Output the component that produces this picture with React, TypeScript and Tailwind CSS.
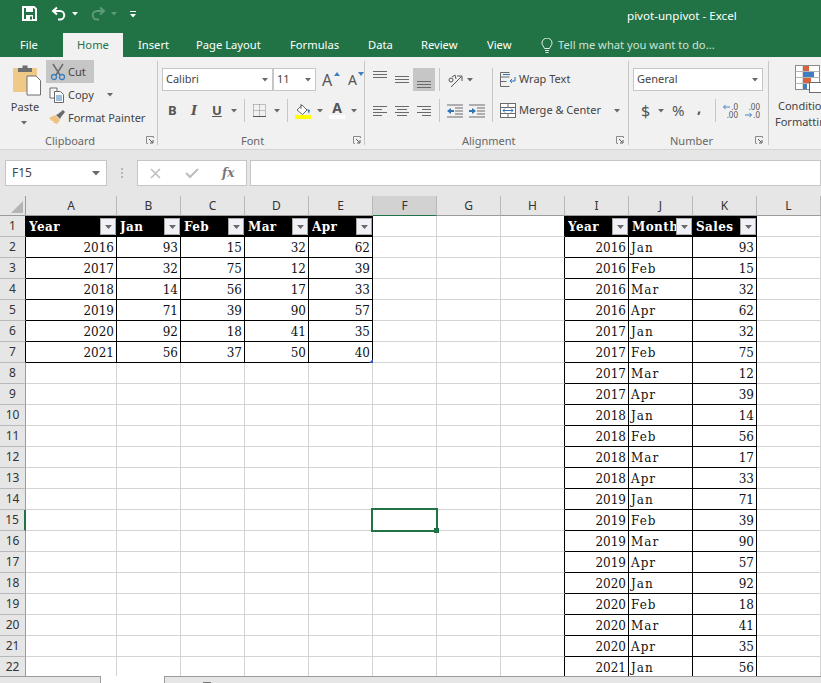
import React from 'react';

const ui = { fontFamily: '"Noto Sans", "Open Sans", sans-serif' };
const serif = { fontFamily: '"DejaVu Serif", "Liberation Serif", serif' };

const Caret = ({ className = 'ml-0' }: { className?: string }) => (
  <svg width="6" height="4" viewBox="0 0 6 4" className={`shrink-0 ${className}`}>
    <path d="M0 0h6L3 3.5z" fill="#6a6a6a" />
  </svg>
);

const Launcher = ({ className }: { className: string }) => (
  <svg width="8" height="8" viewBox="0 0 8 8" className={className}>
    <path d="M.5 7V.5H7.5M7.5 .5V2M.5 7.5H2" stroke="#8a8a8a" fill="none" />
    <path d="M3 3l3.5 3.5M7 4v3H4" stroke="#5a5a5a" fill="none" />
  </svg>
);

const Sep = ({ className }: { className: string }) => <div className={`w-px bg-[#c6c6c6] shrink-0 ${className}`} />;

// horizontal bars used by all the alignment icons
const Lines = ({ rows, h = 14 }: { rows: [number, number, number][]; h?: number }) => (
  <svg width="16" height={h} viewBox={`0 0 16 ${h}`} className="shrink-0">
    {rows.map(([x, y, w], i) => (
      <rect key={i} x={x} y={y} width={w} height="1" fill="#6a6a6a" />
    ))}
  </svg>
);

const Group = ({ w, label, labelClass, launcherClass, children }: { w: string; label: string; labelClass: string; launcherClass: string; children: React.ReactNode }) => (
  <div className={`flex flex-col h-[84px] mt-[4px] border-r border-[#c6c6c6] shrink-0 ${w}`}>
    <div className="flex-1 min-h-0">{children}</div>
    <div className="flex items-center h-[14px] -mb-[2px] text-[#666]">
      <span className={`text-[11px] leading-none ${labelClass}`}>{label}</span>
      <Launcher className={`ml-auto ${launcherClass}`} />
    </div>
  </div>
);

const Select = ({ text, w, caretClass }: { text: string; w: string; caretClass: string }) => (
  <div className={`h-[23px] bg-white border border-[#c6c6c6] flex items-center pl-[3px] text-[11px] text-[#444] shrink-0 ${w}`}>
    <span>{text}</span>
    <Caret className={`ml-auto ${caretClass}`} />
  </div>
);

const TopBar = () => (
  <div className="h-[33px] flex items-center text-white shrink-0">
    <svg width="15" height="15" viewBox="0 0 15 15" className="ml-[22px] -mt-[6px]">
      <path d="M1 1h11l2 2v11H1z" fill="none" stroke="#fff" strokeWidth="2" />
      <rect x="4" y="1" width="7" height="5" fill="#fff" />
      <rect x="4" y="9" width="7" height="5" fill="#fff" />
      <rect x="8" y="10.5" width="2" height="3" fill="#217346" />
    </svg>
    <svg width="15" height="15" viewBox="0 0 15 15" className="ml-[14px] -mt-[6px]">
      <path d="M6 1.5L2 5l4 3.5" fill="none" stroke="#fff" strokeWidth="2" />
      <path d="M2.5 5H9a4 4 0 0 1 0 8.5H7" fill="none" stroke="#fff" strokeWidth="2" />
    </svg>
    <svg width="6" height="4" viewBox="0 0 6 4" className="ml-[6px] -mt-[6px]"><path d="M0 0h6L3 3.5z" fill="#fff" /></svg>
    <svg width="15" height="15" viewBox="0 0 15 15" className="ml-[13px] -mt-[6px]">
      <path d="M9 1.5L13 5 9 8.5" fill="none" stroke="#5f9a7b" strokeWidth="2" />
      <path d="M12.5 5H6a4 4 0 0 0 0 8.5H8" fill="none" stroke="#5f9a7b" strokeWidth="2" />
    </svg>
    <svg width="6" height="4" viewBox="0 0 6 4" className="ml-[5px] -mt-[6px]"><path d="M0 0h6L3 3.5z" fill="#5f9a7b" /></svg>
    <svg width="6" height="7" viewBox="0 0 6 7" className="ml-[13px] -mt-[4px]">
      <rect width="6" height="1" fill="#fff" />
      <path d="M0 3h6L3 6.5z" fill="#fff" />
    </svg>
    <span className="ml-[491px] -mt-px text-[11.6px]">pivot-unpivot - Excel</span>
  </div>
);

const Tabs = () => (
  <div className="h-[24px] flex items-center text-white text-[11.2px] shrink-0 whitespace-nowrap">
    <span className="ml-[20px] w-[18px]">File</span>
    <span className="ml-[25px] h-full w-[60px] bg-[#f1f1f1] text-[#217346] flex items-center justify-center">Home</span>
    <span className="ml-[15px] w-[29px]">Insert</span>
    <span className="ml-[29px] w-[65px]">Page Layout</span>
    <span className="ml-[29px] w-[49px]">Formulas</span>
    <span className="ml-[29px] w-[24px]">Data</span>
    <span className="ml-[29px] w-[37px]">Review</span>
    <span className="ml-[29px] w-[25px]">View</span>
    <svg width="12" height="15" viewBox="0 0 12 15" className="ml-[29px]">
      <path d="M3.5 10.5C3 8.5 1 7.5 1 5a5 5 0 0 1 10 0c0 2.500-2 3.500-2.500 5.500z" fill="none" stroke="#e4efe9" />
      <path d="M4 12.500h4M4.500 14.500h3" stroke="#e4efe9" />
    </svg>
    <span className="ml-[5px] text-[#cfe2d7]">Tell me what you want to do...</span>
  </div>
);

const Clipboard = () => (
  <Group w="w-[158px]" label="Clipboard" labelClass="ml-[45px]" launcherClass="mr-[3px]">
    <div className="flex">
      <div className="w-[46px] shrink-0 flex flex-col items-center text-[11px] text-[#444]">
        <svg width="30" height="32" viewBox="0 0 30 32" className="mt-[3px] ml-[8px]">
          <rect x="1" y="4" width="24" height="24" rx="1" fill="#f0c987" />
          <path d="M6 8V4h4.500V1.500h5V4H20v4z" fill="#6f6f6f" />
          <path d="M15 12h9l4.500 4.500V31H15z" fill="#fff" stroke="#6f6f6f" />
        </svg>
        <span className="leading-none mt-[5px] ml-[4px]">Paste</span>
        <Caret className="mt-[9px] ml-[2px]" />
      </div>
      <div className="flex flex-col text-[11px] text-[#444] leading-none whitespace-nowrap">
        <div className="h-[23px] w-[48px] mt-[-1px] bg-[#c6c6c6] flex items-center">
          <svg width="16" height="18" viewBox="0 0 16 18" className="ml-[4px]">
            <path d="M3 1l7 11M13 1L6 12" stroke="#6a6a6a" strokeWidth="1.500" />
            <circle cx="4" cy="14" r="2.500" fill="none" stroke="#3f7fbf" strokeWidth="1.300" />
            <circle cx="12" cy="14" r="2.500" fill="none" stroke="#3f7fbf" strokeWidth="1.300" />
          </svg>
          <span className="ml-[2px]">Cut</span>
        </div>
        <div className="h-[23px] flex items-center">
          <svg width="16" height="16" viewBox="0 0 16 16" className="ml-[3px]">
            <path d="M1 1h7v3M5 11H1V1" fill="#fff" stroke="#6a6a6a" />
            <path d="M5.500 4.500h6l3 3v8h-9z" fill="#fff" stroke="#6a6a6a" />
            <path d="M7 9h6M7 11h6M7 13h6" stroke="#3f7fbf" />
          </svg>
          <span className="ml-[3px] w-[30px]">Copy</span>
          <Caret className="ml-[9px]" />
        </div>
        <div className="h-[23px] flex items-center">
          <svg width="17" height="15" viewBox="0 0 17 15" className="ml-[3px]">
            <path d="M0 8l6-3 5 5-3 4-2-1-2 0 1-2-2 0z" fill="#eec27e" />
            <path d="M7 5l2-1 5-4 2 2-4 5-1 2z" fill="#6a6a6a" />
          </svg>
          <span className="ml-[2px]">Format Painter</span>
        </div>
      </div>
    </div>
  </Group>
);

const Font = () => (
  <Group w="w-[207px]" label="Font" labelClass="ml-[83px]" launcherClass="mr-[3px]">
    <div className="flex mt-[7px] ml-[4px] items-center">
      <Select text="Calibri" w="w-[111px]" caretClass="mr-[4px]" />
      <Select text="11" w="w-[43px]" caretClass="mr-[4px]" />
      <span className="ml-[6px] text-[16px] text-[#555] leading-none w-[12px]">A</span>
      <svg width="6" height="4" viewBox="0 0 6 4" className="-mt-[12px]"><path d="M0 4h6L3 0z" fill="#3f7fbf" /></svg>
      <span className="ml-[8px] text-[14px] text-[#555] leading-none w-[10px]">A</span>
      <svg width="6" height="4" viewBox="0 0 6 4" className="-mt-[12px]"><path d="M0 0h6L3 4z" fill="#3f7fbf" /></svg>
    </div>
    <div className="flex items-center h-[23px] mt-[8px] text-[#555]">
      <span className="ml-[10px] w-[9px] text-[13px] font-bold leading-none">B</span>
      <span className="ml-[14px] w-[6px] text-[13px] italic font-bold leading-none" style={serif}>I</span>
      <span className="ml-[15px] w-[9px] text-[13px] font-bold leading-none underline">U</span>
      <Caret className="ml-[10px]" />
      <Sep className="ml-[7px] h-[23px]" />
      <svg width="13" height="13" viewBox="0 0 13 13" className="ml-[8px]">
        <path d="M.5 .5h12M.5 6.500h12M.5 .5v12M6.500 .5v12M12.500 .5v12" stroke="#8a8a8a" strokeDasharray="1 1" fill="none" />
        <rect y="12" width="13" height="1" fill="#555" />
      </svg>
      <Caret className="ml-[8px]" />
      <Sep className="ml-[7px] h-[23px]" />
      <svg width="16" height="16" viewBox="0 0 16 16" className="ml-[7px]">
        <path d="M2 7l5-5 5 5-4.500 4.500z" fill="#fff" stroke="#6a6a6a" />
        <path d="M6 1v5" stroke="#6a6a6a" />
        <path d="M12 6l3 1-1 4z" fill="#3f7fbf" />
        <rect y="12" width="16" height="4" fill="#ffff00" />
      </svg>
      <Caret className="ml-[6px]" />
      <div className="ml-[6px] w-[16px] flex flex-col items-center">
        <span className="text-[14px] font-bold leading-[12px] h-[13px]">A</span>
        <div className="w-[16px] h-[4px] bg-white" />
      </div>
      <Caret className="ml-[6px]" />
    </div>
  </Group>
);

const Alignment = () => (
  <Group w="w-[264px]" label="Alignment" labelClass="ml-[97px]" launcherClass="mr-[4px]">
    <div className="flex mt-[7px]">
      <div className="w-[127px] shrink-0">
        <div className="flex items-center h-[23px]">
          <div className="ml-[8px] -mt-[5px]"><Lines rows={[[0, 1, 14], [0, 4, 14], [0, 7, 14]]} /></div>
          <div className="ml-[6px]"><Lines rows={[[0, 3, 14], [0, 6, 14], [0, 9, 14]]} /></div>
          <div className="ml-[2px] w-[22px] h-[23px] bg-[#c6c6c6] flex items-center justify-center">
            <Lines h={16} rows={[[1, 9, 14], [1, 12, 14], [1, 15, 14]]} />
          </div>
          <Sep className="ml-[4px] h-[23px]" />
          <svg width="16" height="16" viewBox="0 0 16 16" className="ml-[7px]">
            <path d="M2 8a2 2 0 1 0 4 0 2 2 0 1 0-4 0M5 5l3-2 1 4" stroke="#555" fill="none" />
            <path d="M4 15L14 5M10 4h5v5" stroke="#555" fill="none" />
          </svg>
          <Caret className="ml-[4px]" />
        </div>
        <div className="flex items-center h-[23px] mt-[8px]">
          <div className="ml-[8px]"><Lines rows={[[0, 2, 14], [0, 5, 9], [0, 8, 14], [0, 11, 9]]} /></div>
          <div className="ml-[6px]"><Lines rows={[[0, 2, 14], [2, 5, 10], [0, 8, 14], [2, 11, 10]]} /></div>
          <div className="ml-[6px]"><Lines rows={[[0, 2, 14], [5, 5, 9], [0, 8, 14], [5, 11, 9]]} /></div>
          <Sep className="ml-[6px] h-[23px]" />
          <svg width="16" height="14" viewBox="0 0 16 14" className="ml-[7px]">
            <path d="M0 1h16M8 4h8M8 7h8M8 10h8M0 13h16" stroke="#6a6a6a" />
            <path d="M0 7l4-3v2h3v2H4v2z" fill="#2f74b5" />
          </svg>
          <svg width="16" height="14" viewBox="0 0 16 14" className="ml-[6px]">
            <path d="M0 1h16M8 4h8M8 7h8M8 10h8M0 13h16" stroke="#6a6a6a" />
            <path d="M7 7L3 4v2H0v2h3v2z" fill="#2f74b5" />
          </svg>
        </div>
      </div>
      <Sep className="h-[54px]" />
      <div className="text-[11px] text-[#444] whitespace-nowrap">
        <div className="flex items-center h-[23px] ml-[7px]">
          <svg width="16" height="15" viewBox="0 0 16 15">
            <path d="M.5 .5h9M.5 .5v14h9M.5 5h9M.5 9.500h6" stroke="#6a6a6a" fill="none" />
            <path d="M15 5v4H10M12 7l-2 2 2 2" stroke="#2f74b5" fill="none" />
            <path d="M3 2.500h7" stroke="#2f74b5" />
          </svg>
          <span className="ml-[3px]">Wrap Text</span>
        </div>
        <div className="flex items-center h-[23px] mt-[8px] ml-[7px]">
          <svg width="16" height="15" viewBox="0 0 16 15">
            <rect x=".5" y=".5" width="15" height="14" fill="#fff" stroke="#6a6a6a" />
            <path d="M.5 4.500h15M.5 10.500h15M8 .5v4M8 10.500v4" stroke="#6a6a6a" />
            <path d="M3 7.500h10M3 7.500l2-2M3 7.500l2 2M13 7.500l-2-2M13 7.500l-2 2" stroke="#2f74b5" fill="none" />
          </svg>
          <span className="ml-[3px] w-[81px]">Merge &amp; Center</span>
          <Caret className="ml-[14px]" />
        </div>
      </div>
    </div>
  </Group>
);

const NumberGroup = () => (
  <Group w="w-[140px]" label="Number" labelClass="ml-[41px]" launcherClass="mr-[5px]">
    <div className="mt-[7px] ml-[4px]">
      <Select text="General" w="w-[130px]" caretClass="mr-[4px]" />
    </div>
    <div className="flex items-center h-[23px] mt-[8px] text-[#555]">
      <span className="ml-[12px] w-[9px] text-[16px] leading-none">$</span>
      <Caret className="ml-[8px]" />
      <span className="ml-[8px] w-[13px] text-[15px] leading-none">%</span>
      <span className="ml-[12px] w-[4px] text-[15px] font-bold leading-none -mt-[6px]">,</span>
      <Sep className="ml-[14px] h-[23px]" />
      <div className="ml-[7px] w-[15px] text-[8px] leading-[8px] text-right relative">
        <div>.0</div>
        <div>.00</div>
        <svg width="7" height="6" viewBox="0 0 8 6" className="absolute left-0 top-px"><path d="M8 3H1M3 .5L.5 3 3 5.500" stroke="#2f74b5" fill="none" /></svg>
      </div>
      <div className="ml-[7px] w-[15px] text-[8px] leading-[8px] text-right relative">
        <div>.00</div>
        <div>.0</div>
        <svg width="7" height="6" viewBox="0 0 8 6" className="absolute left-0 top-[9px]"><path d="M0 3h7M5 .5L7.500 3 5 5.500" stroke="#2f74b5" fill="none" /></svg>
      </div>
    </div>
  </Group>
);

const Conditional = () => (
  <div className="shrink-0 relative w-[60px] text-[11px] text-[#444] leading-[16px]">
    <svg width="30" height="30" viewBox="0 0 30 30" className="ml-[26px] mt-[8px]">
      <rect x=".5" y=".5" width="24" height="24" fill="#fff" stroke="#8a8a8a" />
      <path d="M.5 6.500h24M.5 12.500h24M.5 18.500h24M8 .5v24" stroke="#b5b5b5" />
      <rect x="8" y="1" width="6" height="5" fill="#d8623c" />
      <rect x="8" y="7" width="11" height="5" fill="#3f7fbf" />
      <rect x="8" y="13" width="8" height="5" fill="#d8623c" />
      <rect x="8" y="19" width="4" height="5" fill="#3f7fbf" />
      <rect x="14.500" y="17.500" width="14" height="10" fill="#fff" stroke="#6a6a6a" />
    </svg>
    <div className="ml-[9px] mt-[3px] whitespace-nowrap">Conditional</div>
    <div className="ml-[6px] whitespace-nowrap">Formatting</div>
  </div>
);

const FormulaBar = () => (
  <div className="h-[46px] bg-[#e6e6e6] flex items-start pt-[10px] shrink-0">
    <div className="ml-[5px] w-[102px] h-[26px] bg-white border border-[#c6c6c6] flex items-center pl-[6px] text-[12px] text-[#444]">
      F15
      <svg width="8" height="5" viewBox="0 0 8 5" className="ml-auto mr-[6px]"><path d="M0 0h8L4 4.500z" fill="#6a6a6a" /></svg>
    </div>
    <div className="ml-[14px] h-[26px] flex flex-col justify-center gap-[2px]">
      <div className="w-[2px] h-[2px] bg-[#b5b5b5]" />
      <div className="w-[2px] h-[2px] bg-[#b5b5b5]" />
      <div className="w-[2px] h-[2px] bg-[#b5b5b5]" />
    </div>
    <div className="ml-[14px] w-[110px] h-[26px] bg-white border border-[#c6c6c6] flex items-center">
      <svg width="11" height="11" viewBox="0 0 11 11" className="ml-[12px]"><path d="M1 1l9 9M10 1l-9 9" stroke="#bdbdbd" strokeWidth="1.500" /></svg>
      <svg width="14" height="11" viewBox="0 0 14 11" className="ml-[24px]"><path d="M1 5l4 4 8-8" stroke="#bdbdbd" strokeWidth="2" fill="none" /></svg>
      <span className="ml-[23px] text-[12px] italic font-bold text-[#777] leading-none" style={serif}>fx</span>
    </div>
    <div className="ml-[3px] flex-1 h-[26px] bg-white border border-[#c6c6c6]" />
  </div>
);

const table1 = [
  [2016, 93, 15, 32, 62],
  [2017, 32, 75, 12, 39],
  [2018, 14, 56, 17, 33],
  [2019, 71, 39, 90, 57],
  [2020, 92, 18, 41, 35],
  [2021, 56, 37, 50, 40],
];
const months = ['Jan', 'Feb', 'Mar', 'Apr'];
const table2 = [
  [93, 15, 32, 62],
  [32, 75, 12, 39],
  [14, 56, 17, 33],
  [71, 39, 90, 57],
  [92, 18, 41, 35],
  [56],
].flatMap((vals, i) => vals.map((v, m) => ({ year: 2016 + i, month: months[m], sales: v })));

const columns = ['A', 'B', 'C', 'D', 'E', 'F', 'G', 'H', 'I', 'J', 'K', 'L'];
const gridCols = 'grid grid-cols-[26px_91px_repeat(11,64px)]';

const HeaderCell = ({ text }: { text: string }) => (
  <div className="bg-black h-[21px] flex items-center pl-[3px] pr-px text-white text-[12px] font-bold overflow-hidden" style={serif}>
    <span className="flex-1 min-w-0 overflow-hidden whitespace-nowrap pt-px tracking-[0.4px]">{text}</span>
    <div className="w-[16px] h-[17px] shrink-0 bg-[#eff1f6] border border-[#a8a8a8] flex items-center justify-center">
      <svg width="7" height="4" viewBox="0 0 7 4"><path d="M0 0h7L3.500 4z" fill="#6a6a6a" /></svg>
    </div>
  </div>
);

const Cell = ({ value, dark, left, over, children }: { value?: string | number; dark?: boolean; left?: boolean; over?: boolean; children?: React.ReactNode }) => (
  <div
    className={`h-[21px] border-r border-b flex items-center pt-px text-[12px] text-[#111] pr-[2px] pl-[2px] relative ${dark ? 'border-black' : 'border-[#d4d4d4]'} ${left ? 'justify-start tracking-[1px]' : 'justify-end'} ${over ? 'border-r-black' : ''}`}
    style={serif}
  >
    {value}
    {children}
  </div>
);

const Sheet = () => {
  const rows = Array.from({ length: 22 }, (_, i) => i + 1);
  return (
    <div className="flex-1 min-h-0 overflow-hidden bg-white">
      <div className={`${gridCols} h-[20px] bg-[#e6e6e6]`}>
        <div className="border-r border-b border-[#9b9b9b] flex items-end justify-end">
          <svg width="12" height="12" viewBox="0 0 12 12" className="mr-[2px] mb-[2px]"><path d="M12 0v12H0z" fill="#b5b5b5" /></svg>
        </div>
        {columns.map((c) => (
          <div
            key={c}
            className={`flex items-center justify-center text-[12px] text-[#333] border-r border-[#b9b9b9] border-b ${c === 'F' ? 'bg-[#d2d2d2] border-b-[#217346]' : 'border-b-[#9b9b9b]'}`}
            style={ui}
          >
            {c}
          </div>
        ))}
      </div>
      <div className={gridCols}>
        {rows.map((r) => {
          const t1 = r >= 2 && r <= 7 ? table1[r - 2] : null;
          const t2 = r >= 2 ? table2[r - 2] : null;
          return (
            <React.Fragment key={r}>
              <div
                className={`h-[21px] bg-[#e6e6e6] border-b border-b-[#b9b9b9] flex items-center justify-center text-[12px] text-[#333] ${r === 15 ? 'bg-[#d2d2d2] border-r-2 border-r-[#217346]' : `border-r ${r <= 7 ? 'border-r-black' : 'border-r-[#9b9b9b]'}`}`}
                style={ui}
              >
                {r}
              </div>
              {r === 1 ? (
                ['Year', 'Jan', 'Feb', 'Mar', 'Apr'].map((h) => <HeaderCell key={h} text={h} />)
              ) : t1 ? (
                t1.map((v, i) => (
                  <Cell key={i} value={v} dark>
                    {r === 7 && i === 4 && (
                      <svg width="4" height="4" viewBox="0 0 4 4" className="absolute -right-px -bottom-px z-10"><path d="M4 0v4H0z" fill="#2f4fb0" /></svg>
                    )}
                  </Cell>
                ))
              ) : (
                [0, 1, 2, 3, 4].map((i) => <Cell key={i} />)
              )}
              <Cell>
                {r === 15 && (
                  <div className="absolute -left-[2px] -top-[2px] w-[67px] h-[24px] border-2 border-[#217346] z-10">
                    <div className="absolute -right-[3px] -bottom-[3px] w-[5px] h-[5px] bg-[#217346]" />
                  </div>
                )}
              </Cell>
              <Cell />
              <Cell over />
              {r === 1 ? (
                ['Year', 'Month', 'Sales'].map((h) => <HeaderCell key={h} text={h} />)
              ) : t2 ? (
                <>
                  <Cell value={t2.year} dark />
                  <Cell value={t2.month} dark left />
                  <Cell value={t2.sales} dark />
                </>
              ) : null}
              <Cell />
            </React.Fragment>
          );
        })}
      </div>
    </div>
  );
};

const BottomBar = () => (
  <div className="h-[7px] flex shrink-0">
    <div className="w-[101px] bg-[#e6e6e6] border-t border-r border-[#9b9b9b]" />
    <div className="w-[63px] bg-white" />
    <div className="flex-1 bg-[#e6e6e6] border-t border-l border-[#9b9b9b] flex items-end">
      <div className="ml-[38px] w-[8px] h-px bg-[#777]" />
    </div>
  </div>
);

export default function App() {
  return (
    <div className="w-[821px] h-[683px] flex flex-col overflow-hidden" style={ui}>
      <div className="bg-[#217346] shrink-0">
        <TopBar />
        <Tabs />
      </div>
      <div className="h-[93px] bg-[#f1f1f1] border-b border-[#d4d4d4] flex shrink-0">
        <Clipboard />
        <Font />
        <Alignment />
        <NumberGroup />
        <Conditional />
      </div>
      <FormulaBar />
      <Sheet />
      <BottomBar />
    </div>
  );
}
